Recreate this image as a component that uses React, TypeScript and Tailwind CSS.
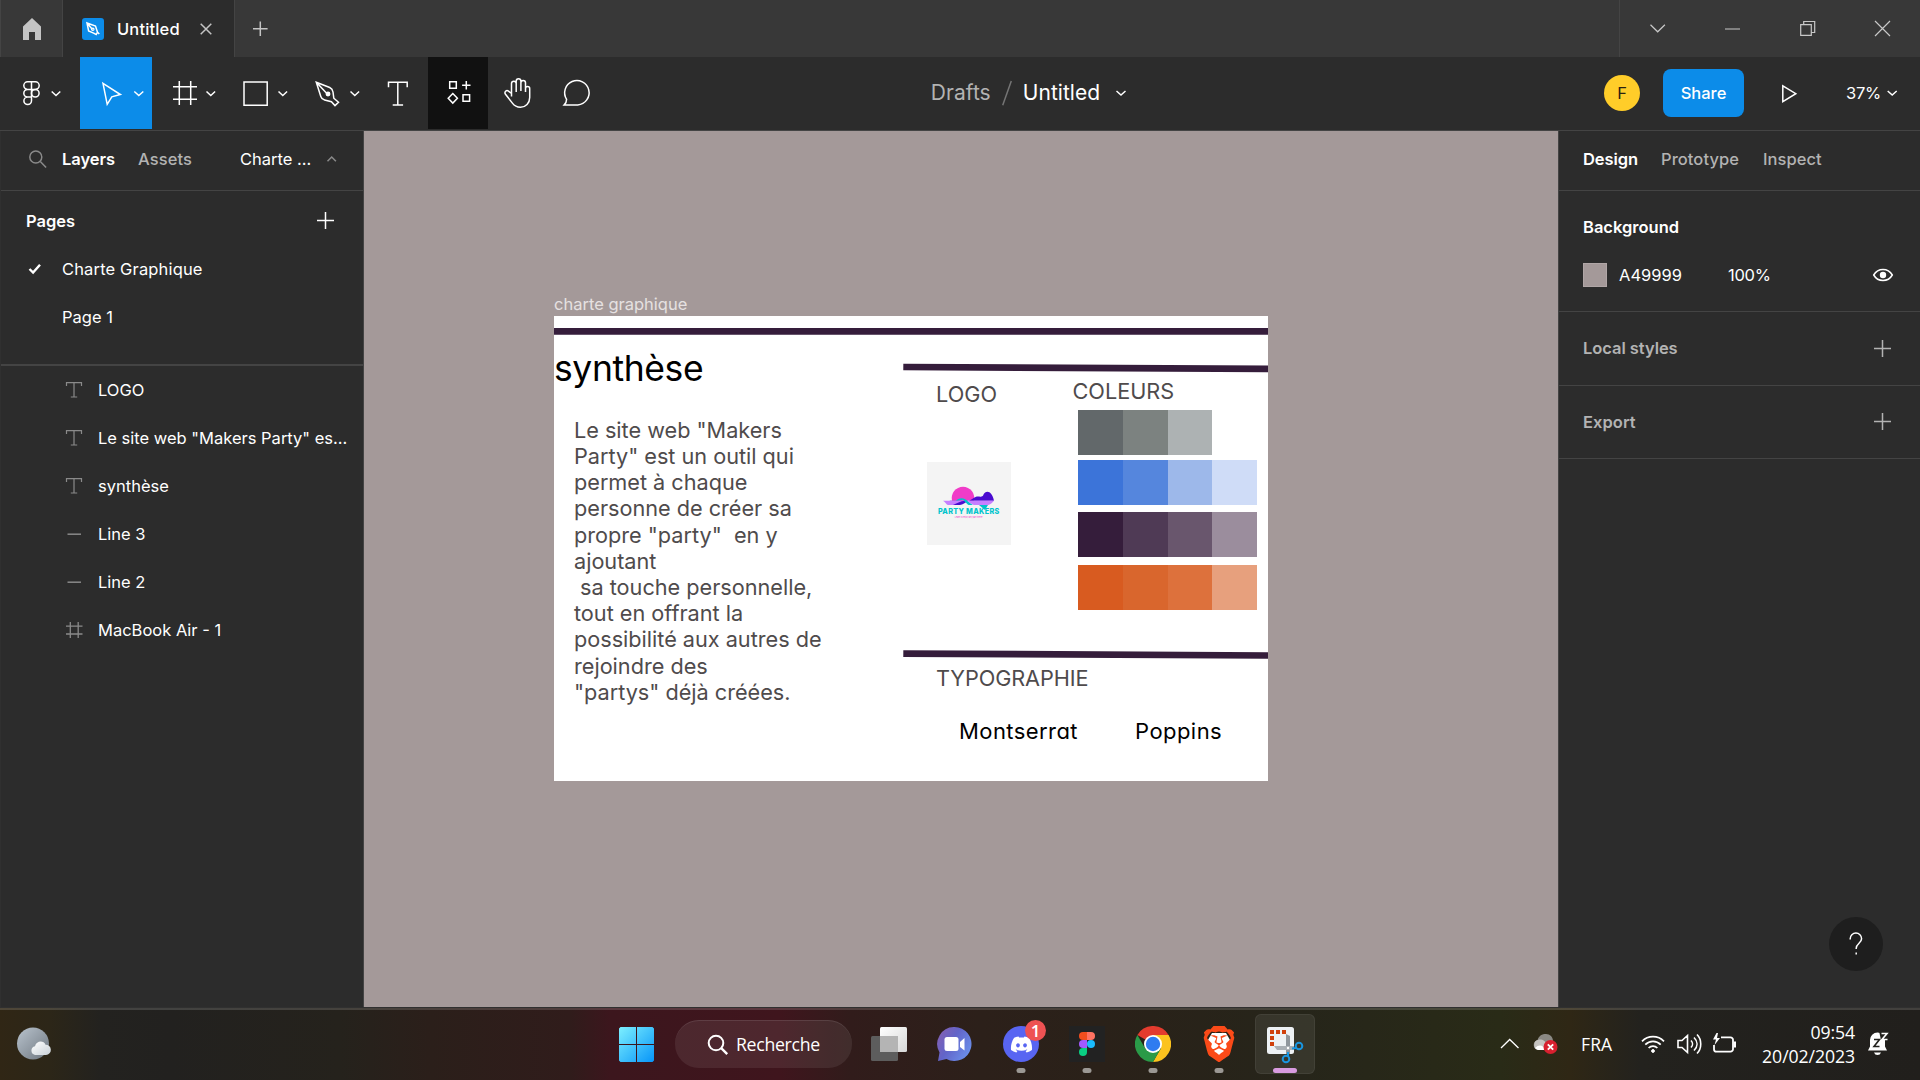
import React from "react";
import { FaDiscord } from "react-icons/fa";
import { SiBrave } from "react-icons/si";

type Kids = { children: React.ReactNode };

function Art({ w, h, children, className = "" }: Kids & { w: number; h: number; className?: string }) {
  return (
    <svg
      width={w}
      height={h}
      viewBox={`0 0 ${w} ${h}`}
      fill="none"
      stroke="currentColor"
      strokeWidth="1.5"
      className={`block shrink-0 ${className}`}
    >
      {children}
    </svg>
  );
}

function Plus({ className = "" }: { className?: string }) {
  return (
    <Art w={18} h={18} className={className}>
      <path d="M8.500 0v17M0 8.500h17" />
    </Art>
  );
}

function TitleBar() {
  return (
    <header className="flex h-[57px] shrink-0 bg-[#383838] text-[#c4c4c4]">
      <div className="flex w-[63px] shrink-0 border-x border-[#444444]">
        <Art w={61} h={57}>
          <path d="M22 26.500L31 18l9 8.500V40h-6v-8h-6v8h-6z" fill="currentColor" stroke="none" />
        </Art>
      </div>
      <div className="flex w-[172px] shrink-0 items-center border-r border-[#444444] bg-[#2c2c2c] pl-[19px] pt-px">
        <Art w={22} h={22} className="text-white">
          <rect width="22" height="22" rx="3" fill="#0c8ce9" stroke="none" />
          <path d="M5 5l8.500 3 2 6.200-1.300 2.300-2.600-1.400L6.600 13z M5 5l5.500 6.500M15.500 14.200l1.800 1.800" />
          <circle cx="10.800" cy="11.300" r="1.200" strokeWidth="1.200" />
        </Art>
        <span className="ml-[13px] w-[70px] text-[16.500px] font-medium tracking-[0.150px] text-white">Untitled</span>
        <Art w={12} h={12} className="ml-[13px]">
          <path d="M.7.700l10.600 10.600M11.300.7L.7 11.300" />
        </Art>
      </div>
      <Art w={52} h={57}>
        <path d="M25.300 21.500v14.500M18 28.700h14.600" />
      </Art>
      <div className="ml-auto flex w-[301px] border-l border-[#444444]">
        <Art w={300} h={57} className="text-[#c8c8c8]">
          <g strokeWidth="1.200">
            <path d="M30.500 24.800l7.200 7 7.200-7M105 29h15M255 21l15 15M270 21l-15 15" />
            <path d="M180.700 24.700h10.600v10.600h-10.600zM183.700 24.500v-3h11v11h-3.200" />
          </g>
        </Art>
      </div>
    </header>
  );
}

function Toolbar() {
  return (
    <div className="flex h-[74px] shrink-0 border-b border-[#444444] bg-[#2c2c2c] text-white">
      <div className="flex w-[608px] shrink-0">
        <Art w={80} h={73}>
          <path d="M31.500 24.800h-3.900a3.800 3.800 0 0 0 0 7.600h3.900zM31.500 24.800h3.900a3.800 3.800 0 0 1 0 7.600h-3.900zM31.500 32.400h-3.900a3.800 3.800 0 0 0 0 7.600h3.900zM31.500 40h-3.900a3.800 3.800 0 1 0 3.900 3.800z" />
          <circle cx="35.300" cy="36.200" r="3.800" />
          <path d="M51.700 34.500l4.300 4 4.300-4" />
        </Art>
        <Art w={72} h={72} className="bg-[#0c8ce9]">
          <path d="M23 26.300l17.400 11.200-8.600 2.300-4.600 7.500z" />
          <path d="M54.300 34.500l4.500 4 4.500-4" />
        </Art>
        <Art w={72} h={73}>
          <path d="M27.300 24v24M38.700 24v24M21 29.700h24M21 42.300h24" />
          <path d="M54.500 34.500l4.300 4 4.300-4" />
        </Art>
        <Art w={72} h={73}>
          <path d="M20 25h23.200v23.200H20z" />
          <path d="M54.500 34.500l4.300 4 4.300-4" />
        </Art>
        <Art w={72} h={73}>
          <path d="M20.300 25.200l13.400 5.300c2.200 1 3 2.500 3.300 4.500l.8 6.200 4.700 4-3.500 3.400-3.600-3.900-6.800-1.700c-2-.5-3.200-1.700-3.800-3.600zM20.300 25.200l11.500 12.300" />
          <circle cx="32" cy="37" r="1.700" fill="currentColor" />
          <path d="M54.500 34.500l4.300 4 4.300-4" />
        </Art>
        <Art w={60} h={73}>
          <path d="M20.500 30.200v-5h18.700v5M29.800 25.200v22.500M24.700 47.900h10.400" />
        </Art>
        <Art w={60} h={72} className="bg-[#111111]">
          <path d="M21.700 24.700h6.600v6.600h-6.600zM35 37.700h6.600v6.600H35zM38.300 24v8.400M34.100 28.200h8.400M24.800 36.500l4.600 4.800-4.600 4.800-4.600-4.800z" />
        </Art>
        <Art w={60} h={73}>
          <path d="M23.500 39.500V26.600a2.350 2.350 0 0 1 4.700 0V35M28.200 34V24.200a2.350 2.350 0 0 1 4.700 0V34M32.900 33v-7.200a2.300 2.300 0 0 1 4.600 0V35M37.500 34v-2.400a2.100 2.100 0 0 1 4.200 0v8.900c0 5.600-4 9.700-9.300 9.700-3.600 0-6-1.400-8-4.100l-6.900-8.900c-1.600-2.200.9-4.700 3-3.100l3 2.400" />
        </Art>
        <Art w={60} h={73}>
          <path d="M16.200 47.900c1.600-1.600 2.400-3.400 2.400-5.600A12.200 12.200 0 1 1 29.800 47.900z" />
        </Art>
      </div>
      <div className="flex w-[836px] items-center justify-center pb-px pl-[6px] text-[21px] tracking-[0.050px]">
        <span className="text-[#b3b3b3]">Drafts</span>
        <Art w={10} h={26} className="mx-[11px] text-[#757575]">
          <path d="M.7 25.200L9.300 1" />
        </Art>
        <span>Untitled</span>
        <Art w={12} h={8} className="ml-[15px]">
          <path d="M1.500 2l4.500 4 4.500-4" />
        </Art>
      </div>
      <div className="ml-auto flex items-center pb-px text-[16.500px]">
        <span className="flex size-9 items-center justify-center rounded-full bg-[#ffcd29] text-[#2a2110]">F</span>
        <button className="ml-[23px] h-12 w-[81px] rounded-lg bg-[#0c8ce9] font-medium">Share</button>
        <Art w={102} h={73}>
          <path d="M38.800 28.800v15.800l13-7.900z" />
        </Art>
        <span className="w-[41px] tracking-[-0.300px]">37%</span>
        <Art w={33} h={8}>
          <path d="M.7 2l4.500 4 4.500-4" />
        </Art>
      </div>
    </div>
  );
}

function LayerIcon({ kind }: { kind: string }) {
  return (
    <Art w={18} h={18} className="text-[#8a8a8a]">
      {kind === "text" && <path d="M1.500 5V1.700h15V5M9 1.700V16M5.800 16h6.400" strokeWidth="1.200" />}
      {kind === "line" && <path d="M2.500 9.200H16" />}
      {kind === "frame" && <path d="M5.300 1v16M13.200 1v16M1 5.200h16.500M1 13h16.500" strokeWidth="1.300" />}
    </Art>
  );
}

const layers = [
  ["text", "LOGO"],
  ["text", 'Le site web "Makers Party" es...'],
  ["text", "synthèse"],
  ["line", "Line 3"],
  ["line", "Line 2"],
  ["frame", "MacBook Air - 1"],
];

function LeftPanel() {
  return (
    <aside className="w-[364px] shrink-0 border-x border-[#444444] border-l-[#303030] bg-[#2c2c2c] text-[16.500px] text-white">
      <div className="flex h-[60px] items-center border-b border-[#444444] pb-[3px] pl-[27px]">
        <Art w={20} h={20} className="text-[#8a8a8a]">
          <circle cx="7.800" cy="8" r="6" />
          <path d="M12.300 12.500l5.800 6" />
        </Art>
        <span className="ml-[14px] w-[76px] font-semibold tracking-[-0.050px]">Layers</span>
        <span className="w-[102px] font-medium tracking-[0.100px] text-[#b3b3b3]">Assets</span>
        <span className="w-[86px]">Charte ...</span>
        <Art w={12} h={8} className="text-[#8a8a8a]">
          <path d="M1.500 6.200l4.200-4.200 4.200 4.200" />
        </Art>
      </div>
      <div className="h-[175px] border-b-2 border-[#444444]">
        <div className="flex h-[60px] items-center justify-between pl-[25px] pr-[28px]">
          <span className="font-semibold tracking-[-0.020px]">Pages</span>
          <Plus />
        </div>
        <div className="-mt-[6px] flex h-12 items-center pl-[27px]">
          <Art w={14} h={12}>
            <path d="M1.500 6l3.600 3.600L12 1.700" strokeWidth="2.400" />
          </Art>
          <span className="ml-[20px] tracking-[0.150px]">Charte Graphique</span>
        </div>
        <div className="flex h-12 items-center pl-[61px]">Page 1</div>
      </div>
      {layers.map(([kind, name]) => (
        <div key={name} className="flex h-12 items-center pl-[64px]">
          <LayerIcon kind={kind} />
          <span className="ml-[15px] whitespace-nowrap">{name}</span>
        </div>
      ))}
    </aside>
  );
}

function RightPanel() {
  return (
    <aside className="relative w-[362px] shrink-0 border-l border-[#444444] bg-[#2c2c2c] text-[16.500px] text-[#b3b3b3]">
      <div className="flex h-[60px] items-center border-b border-[#444444] pb-[3px] pl-6">
        <span className="w-[78px] font-semibold tracking-[-0.100px] text-white">Design</span>
        <span className="w-[102px] font-medium tracking-[0.070px]">Prototype</span>
        <span className="font-medium tracking-[0.050px]">Inspect</span>
      </div>
      <div className="h-[121px] border-b border-[#444444] pl-6 pr-[26px] text-white">
        <div className="flex h-[60px] items-center pt-[12px] font-semibold tracking-[0.010px]">Background</div>
        <div className="mt-[12px] flex h-6 items-center">
          <span className="size-6 border border-[#b0a6a6] bg-[#a49999]" />
          <span className="ml-[12px] w-[109px]">A49999</span>
          <span className="tracking-[-0.300px]">100%</span>
          <Art w={22} h={14} className="ml-auto">
            <path d="M1.700 7C6-.4 16-.4 20.300 7 16 14.400 6 14.400 1.700 7z" />
            <circle cx="11" cy="7" r="3.200" fill="currentColor" stroke="none" />
          </Art>
        </div>
      </div>
      <div className="flex h-[74px] items-center justify-between border-b border-[#444444] pl-6 pr-7 font-semibold">
        <span className="tracking-[-0.050px]">Local styles</span>
        <Plus />
      </div>
      <div className="flex h-[73px] items-center justify-between border-b border-[#444444] pl-6 pr-7 font-semibold">
        <span className="tracking-[0.050px]">Export</span>
        <Plus />
      </div>
      <div className="absolute bottom-[36px] right-[37px] flex size-[54px] items-center justify-center rounded-full bg-[#1e1e1e] text-white">
        <Art w={16} h={24}>
          <path d="M2.200 7.500V6.800a5.700 5.700 0 0 1 11.400 0c0 4.200-5.400 4.700-5.400 9.500v.8" />
          <path d="M8.200 20.600v1.800" />
        </Art>
      </div>
    </aside>
  );
}

function PartyLogo() {
  return (
    <div className="absolute left-[563px] top-[330.500px] size-[83.500px] bg-[#f4f4f4]">
      <Art w={84} h={43}>
        <g stroke="none" transform="translate(0 .7)">
          <path d="M25 38a11.300 11.300 0 1 1 22 0z" fill="#f03cc8" />
          <path d="M42 38c3-1 4-3 7-4 3-1 4 1 7-1 2-6 9-6 11 5z" fill="#4a0bd0" />
          <path d="M20 40c6 4 14 4 21-2H23z" fill="#4a0bd0" />
          <path d="M16 38h22c-6 0-11 5-15 5-3 0-4-3-7-5z" fill="#c680ff" />
          <path d="M29 38c5-4 8-3 15 3l6 4-9-3-5-5z" fill="#00c4cc" />
          <path d="M40 38h27c-3 4-8 6-15 6-5-1-8-3-12-6z" fill="#c680ff" />
        </g>
      </Art>
      <div className="-ml-2 -mr-2 text-center text-[7.200px] font-extrabold leading-[13px] tracking-[0.320px] text-[#00c4cc]">
        PARTY MAKERS
      </div>
      <div className="-mt-[3px] text-center text-[2px] leading-[4px] text-[#f03cc8]">Learn to enjoy any part there!</div>
      <svg width="12" height="6" className="absolute left-[52px] top-[43px]">
        <path d="M0 0h9l-3 5z" fill="#00c4cc" />
      </svg>
    </div>
  );
}

const swatches = [
  ["bg-[#62686a]", "bg-[#7c8280]", "bg-[#adb2b3]"],
  ["bg-[#3c74d9]", "bg-[#5586dd]", "bg-[#9db8ea]", "bg-[#cfdcf7]"],
  ["bg-[#351d3b]", "bg-[#4f3a55]", "bg-[#69566d]", "bg-[#9b8d9d]"],
  ["bg-[#d85b20]", "bg-[#d9662d]", "bg-[#dd713c]", "bg-[#e7a07d]"],
];
const swatchTops = ["top-[94px]", "top-[144px]", "top-[196px]", "top-[249px]"];

const paragraph = [
  'Le site web "Makers',
  'Party" est un outil qui',
  "permet à chaque",
  "personne de créer sa",
  'propre "party"  en y',
  "ajoutant",
  " sa touche personnelle,",
  "tout en offrant la",
  "possibilité aux autres de",
  "rejoindre des",
  '"partys" déjà créées.',
].join("\n");

function Canvas() {
  return (
    <main className="relative grow overflow-hidden bg-[#a49999]">
      <span className="absolute left-[190px] top-[163px] text-[16.500px] leading-[20px] text-[#e6e1e1]">
        charte graphique
      </span>
      {/* Artboard */}
      <section className="absolute left-[190px] top-[185px] h-[464.500px] w-[713.500px] overflow-hidden bg-white text-[21.700px] leading-[26.220px] text-[#4f4b4c]">
        <svg width="714" height="464" className="absolute inset-0" stroke="#351d3b" strokeWidth="6.700">
          <path d="M0 15.300h714M349.300 51l365 1.900M349.300 337.600l365 1.900" />
        </svg>
        <h1 className="absolute left-0 top-[31px] text-[35.500px] leading-[43px] tracking-[-0.400px] text-black">synthèse</h1>
        <p className="absolute left-[20px] top-[100.700px] whitespace-pre tracking-[-0.020px]">{paragraph}</p>
        <h2 className="absolute left-[382px] top-[64.500px]">LOGO</h2>
        <h2 className="absolute left-[518.500px] top-[62px]">COLEURS</h2>
        <h2 className="absolute left-[382px] top-[348.500px] tracking-[-0.100px]">TYPOGRAPHIE</h2>
        <span className="absolute left-[405px] top-[402px] text-[22px] tracking-[0.420px] text-black [font-feature-settings:'cv11']">
          Montserrat
        </span>
        <span className="absolute left-[581px] top-[402px] text-[22px] tracking-[0.450px] text-black [font-feature-settings:'cv11']">
          Poppins
        </span>
        {swatches.map((row, i) => (
          <div key={i} className={`absolute left-[524.300px] flex h-[45px] ${swatchTops[i]}`}>
            {row.map((c) => (
              <span key={c} className={`w-[44.700px] ${c}`} />
            ))}
          </div>
        ))}
      </section>
      <PartyLogo />
    </main>
  );
}

function TaskbarApp({ children, active = false }: Kids & { active?: boolean }) {
  return (
    <div className="relative flex h-[60px] w-[66px] shrink-0 items-center justify-center">
      {active && <span className="absolute inset-x-[3px] inset-y-0 rounded-[6px] border border-white/6 bg-white/8" />}
      <div className="relative">{children}</div>
      <span
        className={`absolute bottom-[1px] left-1/2 h-[5px] -translate-x-1/2 rounded-full ${active ? "w-6 bg-[#d89be0]" : "w-[9px] bg-[#9b9894]"}`}
      />
    </div>
  );
}

function Taskbar() {
  return (
    <footer className="flex h-[73px] shrink-0 flex-col bg-[linear-gradient(90deg,#302615_0,#2c2618_50px,#23221f_100px,#22211f_170px,#25221c_340px,#2b1f1a_430px,#301c1b_570px,#3c161d_610px,#3f151d_780px,#311c1b_850px,#2c201a_980px,#2a2119_1100px,#26251a_1300px,#292b17_1500px,#2f2715_1570px,#23221e_1640px,#211f1c_1920px)] font-['Open_Sans',sans-serif] text-white">
      <div className="h-px bg-[#303030]" />
      <div className="h-[2px] bg-white/15" />
      <div className="flex h-[68px] items-center">
        <svg width="36" height="34" className="ml-[16px] shrink-0">
          <defs>
            <linearGradient id="moon" x1="0" y1="0" x2="1" y2="1">
              <stop stopColor="#b9c3cd" />
              <stop offset="1" stopColor="#6e7780" />
            </linearGradient>
            <linearGradient id="cloud" x1="0" y1="0" x2="1" y2="1">
              <stop stopColor="#fff" />
              <stop offset="1" stopColor="#c9d1d8" />
            </linearGradient>
          </defs>
          <circle cx="17" cy="16.500" r="16" fill="url(#moon)" />
          <path d="M19 28a4.500 4.500 0 0 1 0-8.800c1.500-6 9-6 10.500-1.400a5.100 5.100 0 0 1 .5 10.200z" fill="url(#cloud)" />
        </svg>
        <svg width="35" height="35" className="ml-[567px] shrink-0">
          <defs>
            <linearGradient id="win" x1="0" y1="0" x2="35" y2="35" gradientUnits="userSpaceOnUse">
              <stop stopColor="#7df0ff" />
              <stop offset="1" stopColor="#0795f8" />
            </linearGradient>
          </defs>
          <path
            d="M1.500 0H17v17H0V1.500zM18 0h15.500L35 1.500V17H18zM0 18h17v17H1.500L0 33.500zM18 18h17v15.500L33.500 35H18z"
            fill="url(#win)"
          />
        </svg>
        <div className="ml-[21px] flex h-12 w-[177px] shrink-0 items-center rounded-full border-t border-white/10 bg-white/8 pl-[32px]">
          <Art w={22} h={22}>
            <circle cx="9" cy="9" r="7.300" strokeWidth="2" />
            <path d="M14.200 14.200l6 6" strokeWidth="2.400" />
          </Art>
          <span className="ml-[7px] text-[17.700px] tracking-[-0.300px]">Recherche</span>
        </div>
        <svg width="36" height="35" className="ml-[19px] shrink-0">
          <defs>
            <linearGradient id="pane" x1="0" y1="0" x2="1" y2="1">
              <stop stopColor="#fff" />
              <stop offset="1" stopColor="#d8d8d8" />
            </linearGradient>
          </defs>
          <rect x="9" y="0" width="27" height="25" rx="1.500" fill="url(#pane)" />
          <rect x="0" y="9" width="27" height="25" rx="1.500" fill="#5d5d5d" />
          <path d="M9 9h18v16H9z" fill="#b4b4b4" />
        </svg>
        <svg width="35" height="35" className="ml-[30px] shrink-0">
          <defs>
            <linearGradient id="chat" x1="0" y1="0" x2="1" y2="0.600">
              <stop stopColor="#8a5fae" />
              <stop offset=".5" stopColor="#6264c8" />
              <stop offset="1" stopColor="#6a8ce8" />
            </linearGradient>
          </defs>
          <path d="M17.500 0a17 17 0 1 1-8 32L1 34l1.500-8.500A17 17 0 0 1 17.500 0z" fill="url(#chat)" />
          <rect x="7.500" y="10" width="14" height="14" rx="2.500" fill="#fff" />
          <path d="M23 15l4.500-4v12.500L23 20z" fill="#fff" />
        </svg>
        <div className="ml-[16px] flex">
          <TaskbarApp>
            <span className="flex size-9 items-center justify-center rounded-full bg-[#5865f2]">
              <FaDiscord className="size-[23px]" />
            </span>
            <span className="absolute -right-[7px] -top-[6px] flex size-[21px] items-center justify-center rounded-full bg-[#ee5253] text-[17px] font-semibold leading-none">
              1
            </span>
          </TaskbarApp>
          <TaskbarApp>
            <svg width="36" height="36" className="bg-[#222222]">
              <path d="M18 6h-4a4 4 0 0 0 0 8h4z" fill="#f24e1e" />
              <path d="M18 6h4a4 4 0 0 1 0 8h-4z" fill="#ff7262" />
              <path d="M18 14h-4a4 4 0 0 0 0 8h4z" fill="#a259ff" />
              <circle cx="22" cy="18" r="4" fill="#1abcfe" />
              <path d="M18 22h-4a4 4 0 1 0 4 4z" fill="#0acf83" />
            </svg>
          </TaskbarApp>
          <TaskbarApp>
            <svg width="36" height="36" viewBox="0 0 36 36">
              <path d="M18 18L2.400 9A18 18 0 0 1 33.600 9z" fill="#e33b2e" />
              <path d="M18 9h15.600A18 18 0 0 1 18 36l7.800-13.500z" fill="#fcc31e" />
              <path d="M25.800 22.500L18 36A18 18 0 0 1 2.400 9l7.800 13.500z" fill="#2a9a48" />
              <circle cx="18" cy="18" r="9" fill="#fff" />
              <circle cx="18" cy="18" r="7.200" fill="#2f7cf0" />
            </svg>
          </TaskbarApp>
          <TaskbarApp>
            <span className="relative block h-9 w-[30px]">
              <svg width="30" height="36" className="absolute inset-0">
                <path d="M8 7h14l4 7-4 12-7 5-7-5-4-12z" fill="#fff" />
              </svg>
              <SiBrave className="absolute -left-[3px] top-0 size-9 text-[#fb4a18]" />
            </span>
          </TaskbarApp>
          <TaskbarApp active>
            <svg width="38" height="38" viewBox="0 0 38 38" className="-mb-[2px]">
              <rect x="1" y="1" width="27" height="27" rx="2.500" fill="#edf1f4" />
              <path d="M4 4h4v4H4zM10 4h4v4h-4zM16 4h4v4h-4zM4 10h4v4H4zM4 16h4v4H4z" fill="#d0400c" />
              <path d="M20 8l4 2v18h-4z" fill="#8f969c" />
              <path d="M8 20h20v4H11z" fill="#a9afb4" />
              <circle cx="22" cy="22" r="1.200" fill="#fff" />
              <circle cx="20" cy="33" r="3.300" fill="none" stroke="#1995e0" strokeWidth="2" />
              <circle cx="33" cy="20" r="3.300" fill="none" stroke="#1995e0" strokeWidth="2" />
              <path d="M22 26v4.500M26 22.500l4-.5" stroke="#1995e0" strokeWidth="2" />
            </svg>
          </TaskbarApp>
        </div>
        <div className="ml-auto flex items-center text-[18px]">
          <Art w={20} h={12}>
            <path d="M1 10l8.700-8.500L18.500 10" strokeWidth="1.300" />
          </Art>
          <svg width="26" height="24" className="ml-[13px]">
            <path d="M5 18a5 5 0 0 1-.5-9.800C6 3.500 9 2 13 2c4 0 7 3 7 7v9z" fill="#8b8984" />
            <path d="M5 18a5.300 5.300 0 0 1 .5-10.300C9 7 13 9 14 13l-4 5z" fill="#c5c3c0" />
            <path d="M2 16c4-4 8-3 11 2H5z" fill="#fff" />
            <circle cx="17.500" cy="15" r="7" fill="#d8202f" />
            <path d="M14.800 12.300l5.400 5.400M20.200 12.300l-5.400 5.400" stroke="#fff" strokeWidth="1.800" />
          </svg>
          <span className="ml-[22px] w-[60px] text-[17.500px] tracking-[0.100px]">FRA</span>
          <Art w={24} h={20}>
            <g strokeWidth="1.700">
              <path d="M1 7.300c6-6.300 16-6.300 22 0M4.300 10.700c4.300-4.400 11.100-4.400 15.400 0M7.600 14c2.500-2.500 6.300-2.500 8.800 0" />
              <circle cx="12" cy="17" r="1.400" fill="currentColor" strokeWidth="1" />
            </g>
          </Art>
          <Art w={25} h={22} className="ml-[12px]">
            <path d="M1 7.500h4L10.500 2.500v17L5 14.500H1zM14 7.500c2 2 2 5 0 7M17 4.500c4 4 4 9 0 13M20 1.500c5 5 5 14 0 19" strokeWidth="1.600" />
          </Art>
          <Art w={26} h={22} className="ml-[10px]">
            <path d="M9 4.300h9.500a2.500 2.500 0 0 1 2.500 2.500v9.400a2.500 2.500 0 0 1-2.500 2.500h-14A2.500 2.500 0 0 1 2 16.200V12" strokeWidth="1.800" />
            <path d="M4.500 0L1 6.500h3L2.500 12 8 5H5l1-5zM21.500 8.500h2.500v6h-2.500z" fill="currentColor" stroke="none" />
          </Art>
          <div className="ml-[13px] w-[104px] text-right text-[17.700px] leading-[24px] tracking-[-0.100px]">
            <div>09:54</div>
            <div>20/02/2023</div>
          </div>
          <svg width="24" height="26" className="ml-[11px] mr-[30px]">
            <path d="M2 19.500l2-4V9a7.500 7.500 0 0 1 15 0v6.500l2 4z" fill="#fff" />
            <path d="M8 21.500h7a3.700 3.700 0 0 1-7 0z" fill="#fff" />
            <path d="M8 8.500h5.500L8 15.500h5.500" stroke="#23221e" strokeWidth="1.600" fill="none" />
            <path d="M13 0h10v9H15z" fill="#23221e" />
            <path d="M15.500 2.500H21l-5 6h5.500" stroke="#fff" strokeWidth="1.600" fill="none" />
          </svg>
        </div>
      </div>
    </footer>
  );
}

export default function App() {
  return (
    <div className="flex h-[1080px] w-[1920px] flex-col overflow-hidden bg-[#2c2c2c] font-['Inter',sans-serif]">
      <TitleBar />
      <Toolbar />
      <div className="flex h-[876px] shrink-0">
        <LeftPanel />
        <Canvas />
        <RightPanel />
      </div>
      <Taskbar />
    </div>
  );
}
